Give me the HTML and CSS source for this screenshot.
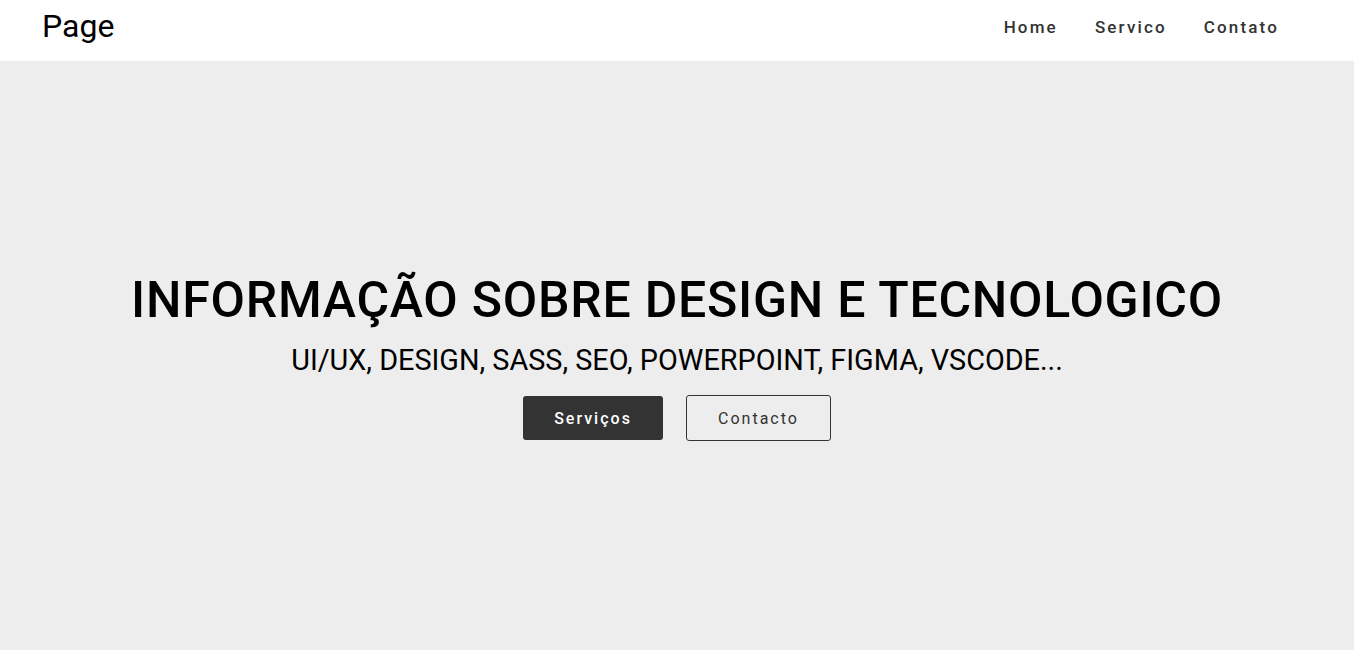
FILE: index.html
```html
<!DOCTYPE html>
<html lang="pt">
<head>
<meta charset="utf-8">
<title>Page</title>
<link rel="stylesheet" href="styles.css">
</head>
<body>
<header class="header">
  <div class="logo">Page</div>
  <nav class="nav">
    <a href="#" class="nav-link">Home</a>
    <a href="#" class="nav-link">Servico</a>
    <a href="#" class="nav-link">Contato</a>
  </nav>
</header>
<section class="hero">
  <h1 class="hero-title">INFORMAÇÃO SOBRE DESIGN E TECNOLOGICO</h1>
  <p class="hero-sub">UI/UX, DESIGN, SASS, SEO, POWERPOINT, FIGMA, VSCODE...</p>
  <div class="hero-actions">
    <a href="#" class="btn btn-dark">Serviços</a>
    <a href="#" class="btn btn-outline">Contacto</a>
  </div>
</section>
</body>
</html>
```
FILE: styles.css
```css
* { box-sizing: border-box; margin: 0; padding: 0; }
html, body { height: 100%; }
body {
  font-family: Roboto, "Liberation Sans", Arial, sans-serif;
  background: #ededed;
  color: #000;
  overflow: hidden;
}
.header {
  height: 61px;
  background: #fff;
  display: flex;
  align-items: center;
  justify-content: space-between;
  padding: 0 75px 0 42px;
}
.logo {
  font-size: 32px;
  font-weight: 400;
  color: #000;
  margin-top: -9px;
}
.nav {
  display: flex;
  gap: 37px;
  margin-top: -7px;
}
.nav-link {
  text-decoration: none;
  color: #333;
  font-size: 17px;
  font-weight: 500;
  letter-spacing: 2.15px;
}
.hero {
  height: calc(100vh - 61px);
  display: flex;
  flex-direction: column;
  align-items: center;
  justify-content: center;
  text-align: center;
}
.hero-title {
  font-size: 50px;
  font-weight: 500;
  letter-spacing: 0.75px;
  line-height: 1.2;
}
.hero-sub {
  font-size: 28.8px;
  font-weight: 400;
  line-height: 1.3;
  margin-top: 12px;
}
.hero-actions {
  display: flex;
  gap: 23px;
  align-items: center;
  margin-top: 16px;
}
.btn {
  text-decoration: none;
  font-size: 16px;
  letter-spacing: 2px;
  border-radius: 3px;
  display: inline-flex;
  align-items: center;
  justify-content: center;
}
.btn-dark {
  background: #333;
  color: #fff;
  width: 140px;
  height: 44px;
  font-weight: 500;
}
.btn-outline {
  border: 1px solid #333;
  color: #333;
  width: 145px;
  height: 46px;
}
```
